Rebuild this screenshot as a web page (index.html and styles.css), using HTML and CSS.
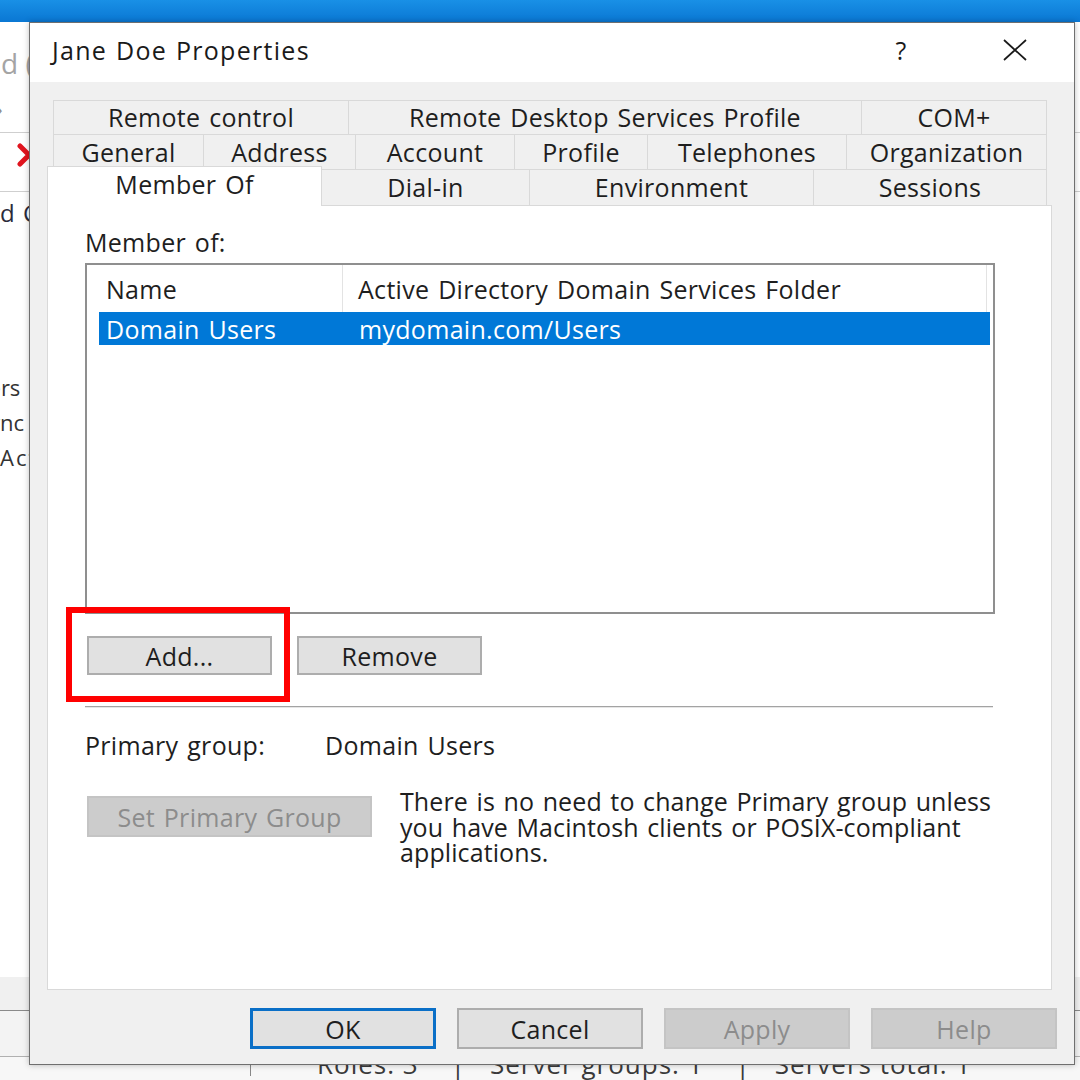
FILE: index.html
```html
<!DOCTYPE html>
<html lang="en">
<head>
<meta charset="utf-8">
<title>Jane Doe Properties</title>
<link rel="stylesheet" href="styles.css">
</head>
<body>
<div class="app">
  <div class="topbar"></div>
  <div class="app-head">
    <div class="ghost">d (</div>
    <div class="ghost-small">&rsaquo;</div>
  </div>
  <div class="app-tool">
    <svg class="app-x" width="26" height="24" viewBox="0 0 26 24"><path d="M4 3 L22 21 M22 3 L4 21" stroke="#e0141e" stroke-width="5" stroke-linecap="round"/></svg>
  </div>
  <div class="app-tree">d C</div>
  <div class="app-list">
    <div class="app-item ind-users">Users</div>
    <div class="app-item ind-sync">Sync</div>
    <div class="app-item ind-ad">Active Directory</div>
  </div>
  <div class="app-fill"></div>
  <div class="app-band"></div>
  <div class="app-band2"></div>
  <div class="app-status">
    <div class="status-cell">Roles: 3</div>
    <div class="status-sep">|</div>
    <div class="status-cell">Server groups: 1</div>
    <div class="status-sep">|</div>
    <div class="status-cell">Servers total: 1</div>
  </div>
</div>

<div class="dialog">
  <div class="titlebar">
    <span class="title">Jane Doe Properties</span>
    <span class="tb-btn">?</span>
    <span class="tb-btn tb-close"><svg width="26" height="22" viewBox="0 0 26 22"><path d="M2 1 L24 21 M24 1 L2 21" stroke="#1a1a1a" stroke-width="1.7"/></svg></span>
  </div>

  <div class="tabs">
    <div class="tabrow row1">
      <div class="tab">Remote control</div>
      <div class="tab">Remote Desktop Services Profile</div>
      <div class="tab last">COM+</div>
    </div>
    <div class="tabrow row2">
      <div class="tab">General</div>
      <div class="tab">Address</div>
      <div class="tab">Account</div>
      <div class="tab">Profile</div>
      <div class="tab">Telephones</div>
      <div class="tab last">Organization</div>
    </div>
    <div class="tabrow row3">
      <div class="tab selected">Member Of</div>
      <div class="tab">Dial-in</div>
      <div class="tab">Environment</div>
      <div class="tab last">Sessions</div>
    </div>
  </div>

  <div class="panel">
    <div class="mo-label">Member of:</div>
    <div class="list">
      <div class="list-head">
        <div class="col-h col-name">Name</div>
        <div class="col-h col-folder">Active Directory Domain Services Folder</div>
      </div>
      <div class="list-row">
        <div>Domain Users</div>
        <div>mydomain.com/Users</div>
      </div>
    </div>
    <div class="btnrow">
      <div class="btn-wrap">
        <div class="btn">Add...</div>
        <div class="highlight"></div>
      </div>
      <div class="btn">Remove</div>
    </div>
    <div class="sep"></div>
    <div class="primary-row">
      <div>Primary group:</div>
      <div>Domain Users</div>
    </div>
    <div class="set-row">
      <div class="btn btn-disabled btn-set">Set Primary Group</div>
      <p class="note">There is no need to change Primary group unless<br>you have Macintosh clients or POSIX-compliant<br>applications.</p>
    </div>
  </div>

  <div class="footer">
    <div class="btn btn-foot btn-default">OK</div>
    <div class="btn btn-foot">Cancel</div>
    <div class="btn btn-foot btn-disabled">Apply</div>
    <div class="btn btn-foot btn-disabled">Help</div>
  </div>
</div>
</body>
</html>
```

FILE: styles.css
```css
* { box-sizing: border-box; }
html, body { margin: 0; padding: 0; }
body {
  width: 1080px;
  height: 1080px;
  overflow: hidden;
  position: relative;
  background: #fff;
  font-family: "Open Sans", "Noto Sans", sans-serif;
  color: #1e1e1e;
}

/* background application */
.app { height: 1080px; display: flex; flex-direction: column; }
.topbar { height: 22px; background: linear-gradient(#1990e6, #0a77d3); }
.app-head { height: 111px; border-bottom: 1px solid #cfcfcf; }
.ghost { font-size: 28px; line-height: 34px; color: #a4a4a4; padding-top: 24px; margin-left: 1px; }
.ghost-small { font-size: 18px; line-height: 20px; color: #8a8a8a; margin-top: 19px; margin-left: -3px; }
.app-tool { height: 59px; border-bottom: 1px solid #cfcfcf; display: flex; align-items: flex-start; padding: 10px 0 0 16px; }
.app-tree { font-size: 24px; line-height: 26px; margin-top: 8px; color: #2b2b3b; letter-spacing: 1px; }
.app-list { margin-top: 144px; }
.app-item { font-size: 22px; line-height: 35px; color: #333; white-space: nowrap; }
.ind-users { text-indent: -38px; }
.ind-sync { text-indent: -23px; }
.ind-ad { letter-spacing: 2px; }
.app-fill { flex: 1; }
.app-band { height: 34px; background: #f0f0f0; border-bottom: 1px solid #8a8a8a; }
.app-band2 { height: 46px; background: #f3f3f3; border-bottom: 1px solid #b0b0b0; }
.app-status { height: 23px; background: #f7f7f7; display: flex; align-items: flex-start; padding-left: 250px; font-size: 26px; line-height: 24px; letter-spacing: 1px; color: #3a3a3a; }
.app-status .status-cell:first-child { border-left: 1px solid #888; padding-left: 66px; }
.status-cell { white-space: nowrap; margin-top: -5px; }
.status-sep { margin: -5px 24px 0 32px; }

/* dialog window */
.dialog {
  position: absolute;
  left: 29px;
  top: 22px;
  width: 1046px;
  height: 1043px;
  border: 1px solid #6f6f6f;
  background: #f0f0f0;
  display: flex;
  flex-direction: column;
  box-shadow: 0 0 6px rgba(0,0,0,0.25);
}
.titlebar { height: 59px; background: #fff; display: flex; align-items: center; padding: 0 29px 6px 22px; flex-shrink: 0; }
.title { flex: 1; font-size: 25px; letter-spacing: 1.3px; word-spacing: 1px; color: #1a1a1a; }
.tb-btn { width: 60px; text-align: center; font-size: 25px; color: #1a1a1a; display: flex; justify-content: center; }
.tb-close { margin-left: 54px; }

/* tabs */
.tabs { margin: 18px 0 0 17px; width: 1000px; font-size: 25px; color: #1e1e1e; letter-spacing: 0.3px; word-spacing: 2px; }
.tabrow { display: grid; }
.row1 { margin-left: 6px; grid-template-columns: 295px 513px 186px; height: 34px; }
.row2 { margin-left: 6px; grid-template-columns: 150px 152px 159px 133px 199px 201px; height: 35px; }
.row3 { grid-template-columns: 275px 207px 284px 234px; height: 36px; }
.tab {
  border-top: 1px solid #d9d9d9;
  border-left: 1px solid #d9d9d9;
  background: #f0f0f0;
  display: flex;
  align-items: center;
  justify-content: center;
  white-space: nowrap;
  line-height: 1;
}
.tab.last { border-right: 1px solid #d9d9d9; }
.tab.selected {
  background: #fff;
  border-right: 1px solid #d9d9d9;
  margin-top: -3px;
  margin-bottom: -1px;
  position: relative;
  z-index: 1;
  align-items: flex-start;
  padding-top: 5px;
}
.tab.selected + .tab { border-left: none; }

/* panel */
.panel {
  margin-left: 17px;
  width: 1005px;
  height: 785px;
  background: #fff;
  border: 1px solid #d9d9d9;
  padding-left: 37px;
  font-size: 25px;
  letter-spacing: 0.3px;
  word-spacing: 2px;
  flex-shrink: 0;
}
.mo-label { margin-top: 22px; line-height: 28px; }
.list { margin-top: 7px; width: 910px; height: 351px; border: 2px solid #8f8f8f; }
.list-head { height: 47px; display: grid; grid-template-columns: 256px 644px; }
.col-h { display: flex; align-items: center; border-right: 1px solid #e3e3e3; white-space: nowrap; }
.col-name { padding-left: 19px; }
.col-folder { padding-left: 15px; }
.list-row {
  margin-left: 12px;
  width: 891px;
  height: 33px;
  background: #0078d7;
  color: #fff;
  display: grid;
  grid-template-columns: 253px 1fr;
  align-items: center;
  padding-left: 7px;
  white-space: nowrap;
}

.btn {
  width: 185px;
  height: 39px;
  background: #e1e1e1;
  border: 2px solid #adadad;
  display: flex;
  align-items: center;
  justify-content: center;
  color: #1e1e1e;
  white-space: nowrap;
}
.btn-disabled { background: #cccccc; border-color: #c4c4c4; color: #8c8c8c; }
.btnrow { margin-top: 22px; margin-left: 2px; display: flex; gap: 25px; }
.btn-wrap { position: relative; }
.highlight {
  position: absolute;
  left: -21px;
  top: -29px;
  width: 224px;
  height: 95px;
  border: 6px solid #ff0000;
}

.sep { margin-top: 31px; width: 908px; border-top: 1px solid #a3a3a3; border-bottom: 1px solid #e6e6e6; }
.primary-row { margin-top: 23px; display: grid; grid-template-columns: 240px 1fr; line-height: 28px; }
.set-row { margin-top: 30px; display: flex; align-items: flex-start; }
.btn-set { margin-top: 7px; margin-left: 2px; width: 285px; height: 41px; }
.note { margin: 0 0 0 28px; line-height: 25.5px; white-space: nowrap; letter-spacing: 0.1px; }

.footer { margin-top: 18px; display: flex; justify-content: flex-end; gap: 21px; padding-right: 17px; font-size: 25px; letter-spacing: 0.3px; }
.btn-foot { width: 186px; height: 41px; }
.btn-default { border: 3px solid #0a6fc7; }
```
